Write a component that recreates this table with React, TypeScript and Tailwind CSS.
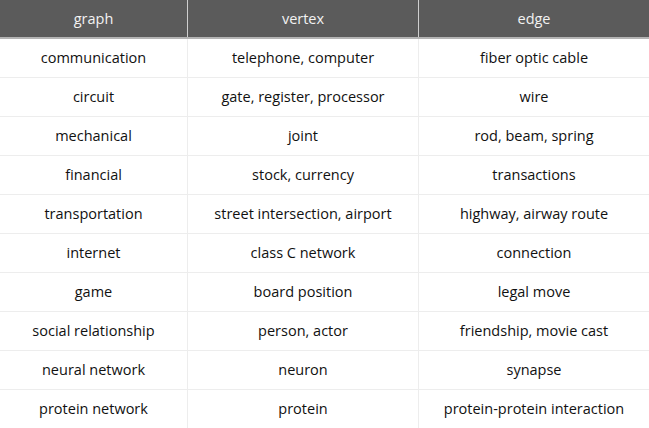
import React from "react";

const rows: [string, string, string][] = [
  ["communication", "telephone, computer", "fiber optic cable"],
  ["circuit", "gate, register, processor", "wire"],
  ["mechanical", "joint", "rod, beam, spring"],
  ["financial", "stock, currency", "transactions"],
  ["transportation", "street intersection, airport", "highway, airway route"],
  ["internet", "class C network", "connection"],
  ["game", "board position", "legal move"],
  ["social relationship", "person, actor", "friendship, movie cast"],
  ["neural network", "neuron", "synapse"],
  ["protein network", "protein", "protein-protein interaction"],
];

export default function App() {
  return (
    <div
      className="w-[649px] h-[428px] bg-white overflow-hidden text-[14.5px]"
      style={{ fontFamily: '"Open Sans", "Noto Sans", sans-serif' }}
    >
      <div className="flex h-[39px] bg-[#5b5b5b] border-b-2 border-[#b4b4b4] text-[#f2f2f2]">
        <div className="w-[188px] border-r border-[#cfcfcf] flex items-center justify-center">graph</div>
        <div className="w-[231px] border-r border-[#cfcfcf] flex items-center justify-center">vertex</div>
        <div className="flex-1 flex items-center justify-center">edge</div>
      </div>
      {rows.map((r, i) => (
        <div key={i} className="flex h-[39px] border-b border-[#ededed] text-[#111111]">
          <div className="w-[188px] border-r border-[#ededed] flex items-center justify-center">{r[0]}</div>
          <div className="w-[231px] border-r border-[#ededed] flex items-center justify-center">{r[1]}</div>
          <div className="flex-1 flex items-center justify-center">{r[2]}</div>
        </div>
      ))}
    </div>
  );
}
